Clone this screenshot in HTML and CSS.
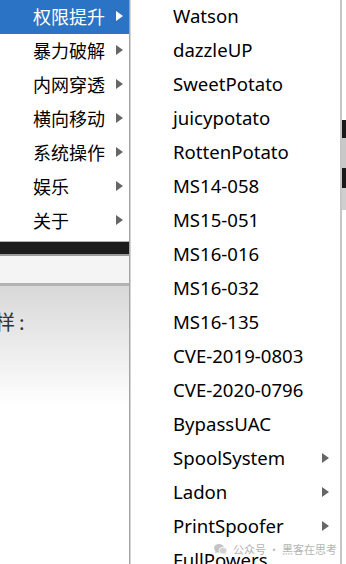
FILE: index.html
```html
<!DOCTYPE html>
<html>
<head>
    <meta charset="utf-8">
    <link rel="stylesheet" href="styles.css">
</head>
<body>
    <div class="screen">
        <div class="left">
            <ul class="menu">
                <li class="item active"><span>权限提升</span><i class="arrow"></i></li>
                <li class="item"><span>暴力破解</span><i class="arrow"></i></li>
                <li class="item"><span>内网穿透</span><i class="arrow"></i></li>
                <li class="item"><span>横向移动</span><i class="arrow"></i></li>
                <li class="item"><span>系统操作</span><i class="arrow"></i></li>
                <li class="item"><span>娱乐</span><i class="arrow"></i></li>
                <li class="item"><span>关于</span><i class="arrow"></i></li>
            </ul>
            <div class="band-dark"></div>
            <div class="band-light"></div>
            <div class="page">
                <p>样:</p>
            </div>
        </div>

        <ul class="submenu">
            <li class="sub">Watson</li>
            <li class="sub">dazzleUP</li>
            <li class="sub">SweetPotato</li>
            <li class="sub">juicypotato</li>
            <li class="sub">RottenPotato</li>
            <li class="sub">MS14-058</li>
            <li class="sub">MS15-051</li>
            <li class="sub">MS16-016</li>
            <li class="sub">MS16-032</li>
            <li class="sub">MS16-135</li>
            <li class="sub">CVE-2019-0803</li>
            <li class="sub">CVE-2020-0796</li>
            <li class="sub">BypassUAC</li>
            <li class="sub">SpoolSystem<i class="arrow"></i></li>
            <li class="sub">Ladon<i class="arrow"></i></li>
            <li class="sub">PrintSpoofer<i class="arrow"></i></li>
            <li class="sub">FullPowers</li>
        </ul>

        <div class="edge"></div>

        <div class="watermark">
            <svg width="13" height="11" viewBox="0 0 13 11">
                <ellipse cx="5" cy="4.2" rx="5" ry="4.2" fill="#c4c4c4"/>
                <path d="M1.6 7.2 L1.2 9.4 L3.6 8.1 Z" fill="#c4c4c4"/>
                <ellipse cx="9" cy="6.6" rx="4" ry="3.4" fill="#d2d2d2" stroke="#fff" stroke-width="0.8"/>
                <path d="M11.4 9.2 L12.2 10.8 L10 9.8 Z" fill="#d2d2d2"/>
            </svg>
            <span>公众号 · 黑客在思考</span>
        </div>
    </div>
</body>
</html>
```

FILE: styles.css
```css
body {
    margin: 0;
    background: #fff;
}

.screen {
    position: relative;
    display: flex;
    width: 346px;
    height: 564px;
    overflow: hidden;
    font-family: "Noto Sans", "Noto Sans CJK SC", sans-serif;
}

/* main menu on the left */
.left {
    width: 129px;
    flex: none;
    display: flex;
    flex-direction: column;
}

.menu {
    list-style: none;
    margin: 0;
    padding: 0 0 3px;
    background: #fff;
    border-bottom: 1px solid #b4b4b4;
}

.item {
    box-sizing: border-box;
    height: 34px;
    display: flex;
    align-items: center;
    justify-content: space-between;
    padding: 0 6px 3px 33px;
    font-family: "Noto Sans CJK SC", sans-serif;
    font-size: 18px;
    color: #000;
}

.item.active {
    background: #2b73c4;
    color: #fff;
}

.arrow {
    width: 0;
    height: 0;
    border-left: 7px solid #666;
    border-top: 5px solid transparent;
    border-bottom: 5px solid transparent;
}

.item.active .arrow {
    border-left-color: #fff;
}

.band-dark {
    height: 12px;
    background: #1c1c1c;
    border-bottom: 2px solid #9a9a9a;
}

.band-light {
    height: 27px;
    background: #f4f4f4;
    border-bottom: 3px solid #b2b2b2;
}

.page {
    flex: 1;
    background: linear-gradient(#d8d8d8, #fff 120px);
}

.page p {
    margin: 24px 0 0;
    text-indent: -5px;
    letter-spacing: 4px;
    font-family: "Noto Sans CJK SC", sans-serif;
    font-size: 20px;
    line-height: 24px;
    color: #333;
}

/* sub menu */
.submenu {
    list-style: none;
    margin: 0;
    padding: 0;
    width: 210px;
    flex: none;
    background: #fff;
    border-left: 1px solid #a4a4a4;
    box-shadow: inset 1px 0 0 #d4d4d4;
    border-right: 2px solid #c6c6c6;
}

.sub {
    box-sizing: border-box;
    height: 34px;
    display: flex;
    align-items: center;
    justify-content: space-between;
    padding: 0 11px 3px 43px;
    font-size: 18.6px;
    color: #000;
}

.edge {
    flex: 1;
    background: linear-gradient(#fff 0 120px, #1a1a1a 120px 138px, #c8c8c8 138px 168px, #1a1a1a 168px 188px, #cfcfcf 188px 210px, #fff 210px);
}

.watermark {
    position: absolute;
    left: 214px;
    top: 541px;
    display: flex;
    align-items: center;
    gap: 6px;
    font-family: "Noto Sans CJK SC", sans-serif;
    font-size: 11px;
    color: #b4b4b4;
}
```
